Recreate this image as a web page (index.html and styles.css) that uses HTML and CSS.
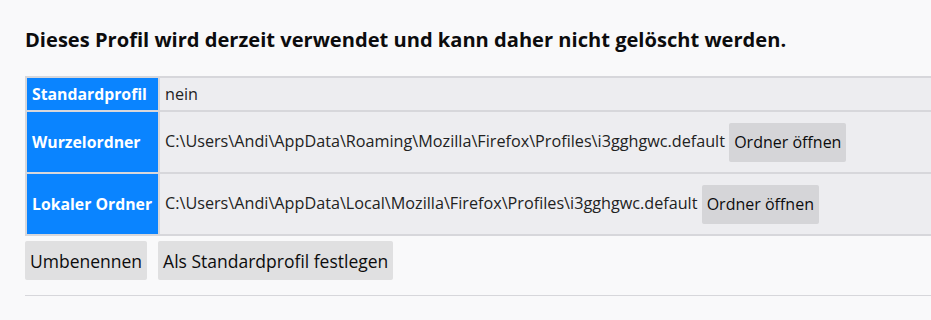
FILE: index.html
```html
<!DOCTYPE html>
<html lang="de">
<head>
  <meta charset="UTF-8">
  <title>Profile</title>
  <link rel="stylesheet" href="styles.css">
</head>
<body>

<div class="profil">
  <h2>Dieses Profil wird derzeit verwendet und kann daher nicht gelöscht werden.</h2>

  <table>
    <tr class="zeile-kurz">
      <th>Standardprofil</th>
      <td>nein</td>
    </tr>
    <tr>
      <th>Wurzelordner</th>
      <td>C:\Users\Andi\AppData\Roaming\Mozilla\Firefox\Profiles\i3gghgwc.default <button>Ordner öffnen</button></td>
    </tr>
    <tr>
      <th>Lokaler Ordner</th>
      <td>C:\Users\Andi\AppData\Local\Mozilla\Firefox\Profiles\i3gghgwc.default <button>Ordner öffnen</button></td>
    </tr>
  </table>

  <div class="aktionen">
    <button>Umbenennen</button>
    <button>Als Standardprofil festlegen</button>
  </div>

  <hr>
</div>

</body>
</html>
```

FILE: styles.css
```css
html {
  overflow: hidden;
  font-family: "Open Sans", sans-serif;
  font-size: 16.2px;
}

body {
  margin: 0;
  padding: 0 0 0 25px;
  background: #f9f9fa;
  color: #0c0c0d;
}

.profil {
  margin-right: -60px;
}

h2 {
  font-size: 20.1px;
  font-weight: bold;
  margin: 0;
  padding-top: 27px;
  height: 49px;
  line-height: 26px;
}

table {
  width: 100%;
  border-collapse: collapse;
}

th,
td {
  border: 2px solid #d7d7db;
  height: 60px;
  padding: 0 5px;
  vertical-align: middle;
  white-space: nowrap;
}

.zeile-kurz th,
.zeile-kurz td {
  height: 32px;
}

th {
  width: 121px;
  background: #0a84ff;
  color: #fff;
  text-align: left;
  font-size: 15.8px;
  font-weight: bold;
}

td {
  background: #ededf0;
  color: #222;
}

button {
  font-family: inherit;
  font-size: 17.5px;
  color: #0c0c0d;
  background: rgba(12, 12, 13, 0.1);
  border: none;
  border-radius: 2px;
  height: 39px;
  padding: 0 5px;
  vertical-align: middle;
}

td button {
  font-size: 16px;
}

.aktionen {
  display: flex;
  gap: 11px;
  margin-top: 5px;
}

hr {
  border: none;
  border-top: 1px solid #d7d7db;
  margin: 15px 0 0;
}
```
